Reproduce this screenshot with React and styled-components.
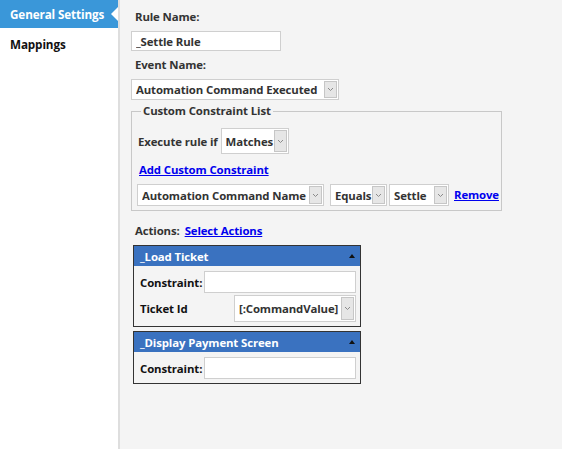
import React from 'react';
import styled, { createGlobalStyle } from 'styled-components';

const Global = createGlobalStyle`
  html, body { margin: 0; padding: 0; height: 100%; }
  body {
    font-family: "Open Sans", "Noto Sans", sans-serif;
    font-size: 11.4px;
    font-weight: 700;
    letter-spacing: -0.12px;
    color: #333;
    background: #f4f4f4;
  }
  #root { height: 100%; }
`;

const Page = styled.div`
  display: flex;
  height: 100vh;
`;

const Sidebar = styled.nav`
  width: 118px;
  flex: none;
  background: #fff;
  border-right: 2px solid #dedede;
  display: flex;
  flex-direction: column;
`;

const Tab = styled.div`
  position: relative;
  height: 28px;
  display: flex;
  align-items: center;
  padding-left: 10px;
  font-size: 11.7px;
  color: ${p => (p.$active ? '#fff' : '#111')};
  background: ${p => (p.$active ? '#3a97d9' : 'transparent')};
  margin-bottom: ${p => (p.$active ? '2px' : '0')};
  ${p =>
    p.$active &&
    `&::after {
      content: '';
      position: absolute;
      right: 0;
      top: 7px;
      border-style: solid;
      border-width: 7px 7px 7px 0;
      border-color: transparent #fff transparent transparent;
    }`}
`;

const Main = styled.main`
  flex: 1;
  background: #f4f4f4;
  padding: 9px 0 0 11px;
  display: flex;
  flex-direction: column;
  align-items: flex-start;
`;

const Label = styled.div`
  line-height: 16px;
  margin: ${p => p.$m || '0'};
  padding-left: 4px;
  color: #333;
`;

const TextInput = styled.input`
  box-sizing: border-box;
  width: ${p => p.$w}px;
  height: ${p => p.$h || 20}px;
  margin: ${p => p.$m || '0'};
  border: 1px solid #cfcfcf;
  background: #fff;
  padding: 0 4px;
  font: inherit;
  letter-spacing: inherit;
  color: #333;
  outline: none;
`;

const SelectBox = styled.div`
  box-sizing: border-box;
  width: ${p => p.$w}px;
  height: ${p => p.$h}px;
  margin: ${p => p.$m || '0'};
  border: 1px solid #cfcfcf;
  background: #fff;
  display: flex;
  align-items: center;
  padding: 1px 1px 1px 4px;
  flex: none;
`;

const SelectText = styled.span`
  flex: 1;
  white-space: nowrap;
  overflow: hidden;
  color: #333;
`;

const DropBtn = styled.span`
  box-sizing: border-box;
  width: 13px;
  align-self: stretch;
  background: #e6e6e6;
  border: 1px solid #c6c6c6;
  display: flex;
  align-items: center;
  justify-content: center;
`;

const Chevron = () => (
  <svg width="7" height="5" viewBox="0 0 7 5">
    <path d="M1 1 L3.5 3.5 L6 1" fill="none" stroke="#8a8a8a" strokeWidth="1" />
  </svg>
);

const Select = ({ w, h, m, children }) => (
  <SelectBox $w={w} $h={h} $m={m}>
    <SelectText>{children}</SelectText>
    <DropBtn>
      <Chevron />
    </DropBtn>
  </SelectBox>
);

const Fieldset = styled.fieldset`
  box-sizing: border-box;
  width: 371px;
  margin: 3px 0 0 0;
  padding: 9px 5px 4px 5px;
  border: 1px solid #c8c8c8;
  min-width: 0;
`;

const Legend = styled.legend`
  padding: 0 2px;
  margin-left: 4px;
  line-height: 16px;
  color: #333;
`;

const Row = styled.div`
  display: flex;
  align-items: center;
  gap: ${p => p.$gap || 0}px;
  margin: ${p => p.$m || '0'};
`;

const Link = styled.a`
  color: #0000ee;
  text-decoration: underline;
  line-height: 16px;
  cursor: pointer;
  margin: ${p => p.$m || '0'};
`;

const ActionsRow = styled.div`
  display: flex;
  align-items: baseline;
  gap: 5px;
  margin: 12px 0 0 4px;
  line-height: 16px;
`;

const Panel = styled.section`
  box-sizing: border-box;
  width: 228px;
  margin: ${p => p.$m || '0'};
  border: 1px solid #333;
  background: #f4f4f4;
`;

const PanelHeader = styled.div`
  height: 20px;
  background: #3a72c0;
  color: #fff;
  display: flex;
  align-items: center;
  justify-content: space-between;
  padding: 0 5px 0 6px;
`;

const Caret = styled.span`
  width: 0;
  height: 0;
  border-style: solid;
  border-width: 0 3.5px 4px 3.5px;
  border-color: transparent transparent #111 transparent;
`;

const PanelBody = styled.div`
  padding: 5px 4px 4px 6px;
  display: flex;
  flex-direction: column;
  gap: 2px;
`;

const FieldRow = styled.div`
  display: flex;
  align-items: center;
  justify-content: space-between;
  color: #111;
`;

export default function App() {
  return (
    <>
      <Global />
      <Page>
        <Sidebar>
          <Tab $active>General Settings</Tab>
          <Tab>Mappings</Tab>
        </Sidebar>
        <Main>
          <Label>Rule Name:</Label>
          <TextInput $w={150} $m="6px 0 0 0" defaultValue="_Settle Rule" />
          <Label $m="6px 0 0 0">Event Name:</Label>
          <Select w={208} h={21} m="6px 0 0 0">Automation Command Executed</Select>
          <Fieldset>
            <Legend>Custom Constraint List</Legend>
            <Row $gap={3} $m="0 0 0 1px">
              <span>Execute rule if</span>
              <Select w={68} h={26}>Matches</Select>
            </Row>
            <Row $m="8px 0 0 2px">
              <Link>Add Custom Constraint</Link>
            </Row>
            <Row $m="6px 0 0 0">
              <Select w={187} h={22} m="0 6px 0 0">Automation Command Name</Select>
              <Select w={57} h={22} m="0 2px 0 0">Equals</Select>
              <Select w={60} h={22} m="0 5px 0 0">Settle</Select>
              <Link>Remove</Link>
            </Row>
          </Fieldset>
          <ActionsRow>
            <span>Actions:</span>
            <Link>Select Actions</Link>
          </ActionsRow>
          <Panel $m="6px 0 0 2px">
            <PanelHeader>
              <span>_Load Ticket</span>
              <Caret />
            </PanelHeader>
            <PanelBody>
              <FieldRow>
                <span>Constraint:</span>
                <TextInput $w={152} $h={22} />
              </FieldRow>
              <FieldRow>
                <span>Ticket Id</span>
                <Select w={122} h={27}>[:CommandValue]</Select>
              </FieldRow>
            </PanelBody>
          </Panel>
          <Panel $m="4px 0 0 2px">
            <PanelHeader>
              <span>_Display Payment Screen</span>
              <Caret />
            </PanelHeader>
            <PanelBody>
              <FieldRow>
                <span>Constraint:</span>
                <TextInput $w={152} $h={22} />
              </FieldRow>
            </PanelBody>
          </Panel>
        </Main>
      </Page>
    </>
  );
}
